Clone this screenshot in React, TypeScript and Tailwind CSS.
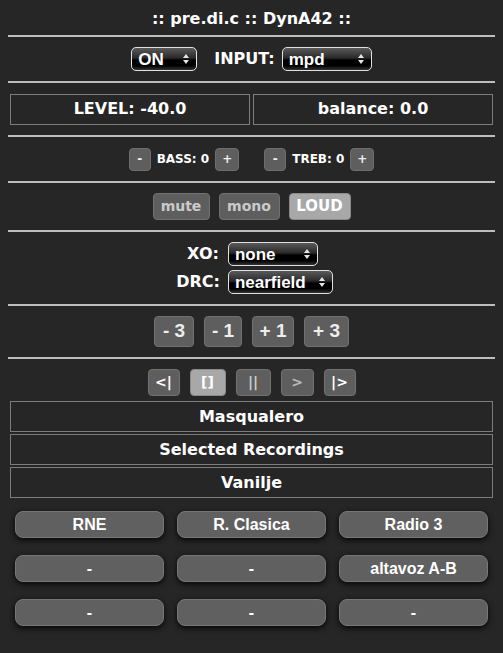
import React from "react"

const verdana = "font-['DejaVu_Sans',Verdana,sans-serif]"
const helv = "font-['Liberation_Sans',Arial,sans-serif]"

function Hr() {
  return <div className="mx-2 h-[2px] bg-[#bdbdbd]" />
}

function Arrows() {
  return (
    <svg width="8" height="12" viewBox="0 0 8 12" className="shrink-0">
      <path d="M4 1 L7 5 L1 5 Z" fill="#e5e5e5" />
      <path d="M4 11 L7 7 L1 7 Z" fill="#e5e5e5" />
    </svg>
  )
}

function Select({ value, width }: { value: string; width: string }) {
  return (
    <div
      className={`${width} h-[24px] flex items-center justify-between pl-[6px] pr-[6px] rounded-[5px] border border-[#e0e0e0] bg-[linear-gradient(#5a5a5a_0%,#2a2a2a_45%,#000_55%,#000_80%,#333_100%)] text-white text-[17px] font-bold ${helv}`}
    >
      <span className="leading-none">{value}</span>
      <Arrows />
    </div>
  )
}

function SmallBtn({ label, w }: { label: string; w: string }) {
  return (
    <div
      className={`${w} h-[23px] flex items-center justify-center rounded-[4px] border border-[#6e6e6e] bg-[#5e5e5e] text-[#eee] text-[12px] font-bold ${verdana}`}
    >
      {label}
    </div>
  )
}

function GrayBtn({
  label,
  w,
  h,
  on,
  text,
}: {
  label: string
  w: string
  h: string
  on?: boolean
  text: string
}) {
  return (
    <div
      className={`${w} ${h} flex items-center justify-center rounded-[4px] border ${
        on ? "bg-[#a8a8a8] border-[#8a8a8a] text-white" : "bg-[#5e5e5e] border-[#707070]"
      } font-bold ${text}`}
    >
      {label}
    </div>
  )
}

function Box({ children, className = "" }: { children: React.ReactNode; className?: string }) {
  return (
    <div
      className={`flex items-center justify-center border border-[#7c7c7c] text-white font-bold ${verdana} ${className}`}
    >
      {children}
    </div>
  )
}

function Radio({ label }: { label: string }) {
  return (
    <div
      className={`h-[27px] flex items-center justify-center rounded-[8px] border border-[#777] bg-[#606060] shadow-[0_2px_6px_rgba(0,0,0,0.9)] text-white text-[16px] font-bold ${helv}`}
    >
      {label}
    </div>
  )
}

export default function App() {
  const radios = ["RNE", "R. Clasica", "Radio 3", "-", "-", "altavoz A-B", "-", "-", "-"]

  return (
    <div className="w-[503px] h-[653px] bg-[#262626] text-white overflow-hidden">
      {/* title */}
      <div className={`h-[35px] flex items-center justify-center pt-[3px] text-[16px] font-bold ${verdana}`}>
        :: pre.di.c :: DynA42 ::
      </div>
      <Hr />

      {/* on / input */}
      <div className="h-[44px] flex items-center justify-center">
        <Select value="ON" width="w-[66px]" />
        <span className={`ml-[17px] mr-[7px] text-[16px] font-bold ${verdana}`}>INPUT:</span>
        <Select value="mpd" width="w-[90px]" />
      </div>
      <Hr />

      {/* level / balance */}
      <div className="h-[52px] flex items-center gap-[3px] px-[10px]">
        <Box className="flex-1 h-[31px] text-[16px]">LEVEL: -40.0</Box>
        <Box className="flex-1 h-[31px] text-[16px]">balance: 0.0</Box>
      </div>
      <Hr />

      {/* bass / treble */}
      <div className="h-[44px] flex items-center justify-center">
        <SmallBtn label="-" w="w-[22px]" />
        <span className={`mx-[6px] text-[12px] font-bold ${verdana}`}>BASS: 0</span>
        <SmallBtn label="+" w="w-[24px]" />
        <div className="w-[25px]" />
        <SmallBtn label="-" w="w-[22px]" />
        <span className={`mx-[6px] text-[12px] font-bold ${verdana}`}>TREB: 0</span>
        <SmallBtn label="+" w="w-[24px]" />
      </div>
      <Hr />

      {/* mute mono loud */}
      <div className="h-[47px] flex items-center justify-center gap-[9px]">
        <GrayBtn label="mute" w="w-[57px]" h="h-[27px]" text={`text-[14px] text-[#cacaca] ${verdana}`} />
        <GrayBtn label="mono" w="w-[61px]" h="h-[27px]" text={`text-[14px] text-[#cacaca] ${verdana}`} />
        <GrayBtn label="LOUD" w="w-[62px]" h="h-[27px]" on text={`text-[15px] ${verdana}`} />
      </div>
      <Hr />

      {/* xo / drc */}
      <div className="h-[72px] flex flex-col items-center justify-center gap-[4px]">
        <div className="flex items-center pl-[2px]">
          <span className={`mr-[9px] text-[16px] font-bold ${verdana}`}>XO:</span>
          <Select value="none" width="w-[90px]" />
        </div>
        <div className="flex items-center pl-[6px]">
          <span className={`mr-[8px] text-[16px] font-bold ${verdana}`}>DRC:</span>
          <Select value="nearfield" width="w-[105px]" />
        </div>
      </div>
      <Hr />

      {/* level steps */}
      <div className="h-[51px] flex items-center justify-center gap-[10px]">
        <GrayBtn label="- 3" w="w-[40px]" h="h-[31px]" text={`text-[19px] text-[#eee] ${helv}`} />
        <GrayBtn label="- 1" w="w-[38px]" h="h-[31px]" text={`text-[19px] text-[#eee] ${helv}`} />
        <GrayBtn label="+ 1" w="w-[42px]" h="h-[31px]" text={`text-[19px] text-[#eee] ${helv}`} />
        <GrayBtn label="+ 3" w="w-[45px]" h="h-[31px]" text={`text-[19px] text-[#eee] ${helv}`} />
      </div>
      <Hr />

      {/* transport */}
      <div className="pt-[10px] flex items-center justify-center gap-[10px]">
        <GrayBtn label="<|" w="w-[32px]" h="h-[27px]" text={`text-[14px] text-white ${verdana}`} />
        <GrayBtn label="[]" w="w-[36px]" h="h-[27px]" on text={`text-[14px] ${verdana}`} />
        <GrayBtn label="||" w="w-[35px]" h="h-[27px]" text={`text-[14px] text-[#ccc] ${verdana}`} />
        <GrayBtn label=">" w="w-[33px]" h="h-[27px]" text={`text-[14px] text-[#bbb] ${verdana}`} />
        <GrayBtn label="|>" w="w-[32px]" h="h-[27px]" text={`text-[14px] text-white ${verdana}`} />
      </div>

      {/* now playing */}
      <div className="mt-[5px] px-[10px] flex flex-col gap-[2px]">
        <Box className="h-[31px] text-[16px]">Masqualero</Box>
        <Box className="h-[31px] text-[16px]">Selected Recordings</Box>
        <Box className="h-[31px] text-[16px]">Vanilje</Box>
      </div>

      {/* presets */}
      <div className="mt-[13px] px-[15px] grid grid-cols-3 gap-x-[13px] gap-y-[17px]">
        {radios.map((r, i) => (
          <Radio key={i} label={r} />
        ))}
      </div>
    </div>
  )
}
